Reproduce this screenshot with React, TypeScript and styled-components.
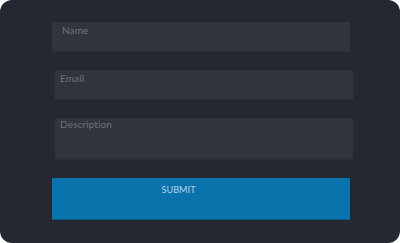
import * as React from 'react';
import styled, { createGlobalStyle } from 'styled-components';

const Global = createGlobalStyle`
  html, body {
    margin: 0;
    padding: 0;
    background: #ffffff;
  }
  * {
    box-sizing: border-box;
  }
`;

const Card = styled.div`
  width: 400px;
  height: 243px;
  background: #252830;
  border-radius: 12px;
  padding-top: 22px;
  display: flex;
  flex-direction: column;
  gap: 18px;
  font-family: Lato, 'Open Sans', sans-serif;
`;

const Field = styled.textarea<{ $shift?: number; $tall?: boolean }>`
  display: block;
  width: 298px;
  height: ${(p) => (p.$tall ? 42 : 30)}px;
  margin: 0 0 0 ${(p) => 52 + (p.$shift || 0)}px;
  padding: ${(p) => (p.$tall ? '0' : '2px')} 0 0 ${(p) => (p.$shift ? 5 : 10)}px;
  background: #31343d;
  border: none;
  border-bottom: 1px solid #2c2f37;
  outline: none;
  resize: none;
  overflow: hidden;
  font-family: inherit;
  font-size: 10px;
  line-height: 13px;
  letter-spacing: 0.1px;
  color: #c9ccd2;

  &::placeholder {
    color: #6e727b;
  }
`;

const Submit = styled.button`
  width: 298px;
  height: 42px;
  margin: 0 0 0 52px;
  padding: 6px 45px 0 0;
  background: #0a73ab;
  border: none;
  border-bottom: 1px solid #0b5c88;
  display: flex;
  justify-content: center;
  align-items: flex-start;
  font-family: inherit;
  font-size: 9px;
  letter-spacing: 0.1px;
  color: #b9d4e6;
  text-transform: uppercase;
  cursor: pointer;
`;

export default function App() {
  return (
    <>
      <Global />
      <Card>
        <Field placeholder="Name" />
        <Field placeholder="Email" $shift={3} />
        <Field placeholder="Description" $shift={3} $tall />
        <Submit>Submit</Submit>
      </Card>
    </>
  );
}
